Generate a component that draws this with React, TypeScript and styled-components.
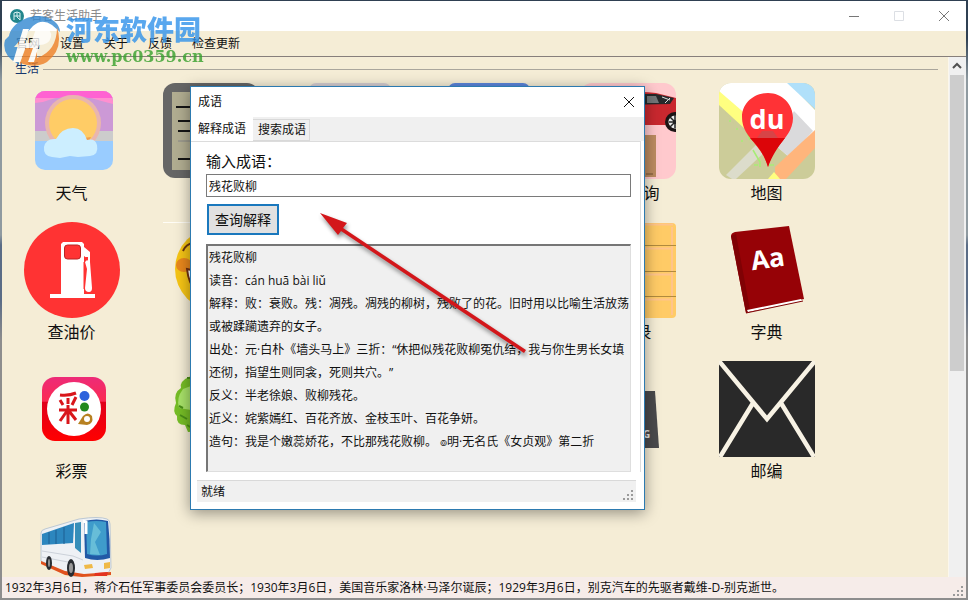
import React from "react";
import styled, { createGlobalStyle, css } from "styled-components";

const GlobalStyle = createGlobalStyle`
  *, *::before, *::after { box-sizing: border-box; }
  body {
    margin: 0;
    font-family: "Open Sans", "Noto Sans CJK SC", sans-serif;
    font-size: 12px;
    line-height: 20px;
    color: #101010;
    text-spacing-trim: space-all;
  }
  button, input, textarea { font: inherit; color: inherit; margin: 0; }
`;

const Desktop = styled.div`
  position: relative;
  height: 100vh;
  overflow: hidden;
  padding: 1px 2px 2px;
  background: linear-gradient(#2f4052 0 38px, #8f9aa0 80px 235px, #5a6c86 245px 300px, #8d8d8d 340px);
`;

const MainWindow = styled.div`
  height: 100%;
  display: flex;
  flex-direction: column;
  background: #f5edd6;
`;

const TitleBar = styled.header`
  height: 30px;
  flex: none;
  display: flex;
  align-items: center;
  gap: 6px;
  padding-left: 8px;
  background: #fff;
  color: #8a8a8a;
`;

const Title = styled.h1`
  flex: 1;
  margin: 0;
  font-size: 12px;
  font-weight: 400;
`;

const CaptionButtons = styled.div`
  display: flex;
`;

const CaptionButton = styled.button`
  width: 45px;
  height: 30px;
  padding: 0;
  border: 0;
  background: none;
  display: grid;
  place-items: center;
`;

const MenuBar = styled.nav`
  flex: none;
  height: 26px;
  display: flex;
  align-items: center;
  gap: 20px;
  padding: 0 14px;
  border-bottom: 1px solid #877f7b;
`;

const MenuItem = styled.button`
  padding: 0;
  border: 0;
  background: none;
  line-height: 20px;
`;

const Body = styled.main`
  flex: 1;
  min-height: 0;
  display: flex;
`;

const Section = styled.section`
  flex: 1;
  overflow: hidden;
`;

const SectionTitle = styled.h2`
  height: 24px;
  margin: 0 10px 2px 13px;
  display: flex;
  align-items: center;
  gap: 4px;
  font-size: 12px;
  font-weight: 400;
  color: #16366c;
  &::after {
    content: "";
    flex: 1;
    border-top: 1px solid #aaa69c;
  }
`;

const TileGrid = styled.div`
  display: grid;
  grid-template-columns: repeat(auto-fill, 139px);
  grid-auto-rows: 139px;
`;

const Tile = styled.button`
  padding: 0;
  border: 0;
  background: none;
  display: flex;
  flex-direction: column;
  align-items: center;
  font-size: 16px;
  line-height: 28px;
  svg { display: block; flex: none; }
`;

const ScrollTrack = styled.div`
  flex: none;
  width: 18px;
  padding: 0 2px 0 1px;
  background: #f0f0f0;
  border-left: 1px solid #fbf7ec;
`;

const ScrollButton = styled.button`
  display: grid;
  place-items: center;
  width: 100%;
  height: 18px;
  padding: 0;
  border: 0;
  background: none;
`;

const ScrollThumb = styled.div`
  height: 57%;
  background: #cdcdcd;
`;

const StatusBar = styled.footer<{ $dialog?: boolean }>`
  flex: none;
  display: flex;
  justify-content: space-between;
  align-items: center;
  padding: 0 1px 0 3px;
  height: 21px;
  background: #f6ece9;
  white-space: nowrap;
  svg { align-self: flex-end; }
  ${(p) => p.$dialog && css`
    height: 22px;
    margin: 8px 8px 7px 6px;
    padding-left: 4px;
    background: #f0f0f0;
    border-top: 1px solid #d9d9d9;
  `}
`;

const Dialog = styled.div`
  position: absolute;
  left: 190px;
  top: 86px;
  width: 455px;
  background: #fff;
  border: 1px solid #2c7ab0;
  box-shadow: 0 3px 14px rgba(0, 0, 0, 0.4);
`;

const DialogTitle = styled.div`
  height: 30px;
  display: flex;
  align-items: center;
  justify-content: space-between;
  padding-left: 7px;
`;

const DialogClose = styled(CaptionButton)`
  width: 31px;
`;

const TabList = styled.div`
  display: flex;
  align-items: flex-end;
  height: 24px;
  background: #f0f0f0;
`;

const Tab = styled.button<{ $active?: boolean }>`
  height: ${(p) => (p.$active ? 24 : 22)}px;
  padding: ${(p) => (p.$active ? "0 6px 0 7px" : "0 3px 0 5px")};
  border: 1px solid ${(p) => (p.$active ? "#fff" : "#d9d9d9")};
  border-left: 0;
  background: ${(p) => (p.$active ? "#fff" : "#f0f0f0")};
  line-height: 20px;
`;

const Panel = styled.div`
  margin-right: 3px;
  padding: 7px 9px 0 15px;
  border-top: 1px solid #dcdcdc;
  border-right: 1px solid #dcdcdc;
`;

const FieldLabel = styled.label`
  display: block;
  font-size: 15px;
  line-height: 25px;
`;

const WordInput = styled.input`
  display: block;
  width: 100%;
  height: 23px;
  padding: 0 2px;
  border: 1px solid #7a7a7a;
  background: #fff;
  outline: 0;
`;

const QueryButton = styled.button`
  display: block;
  margin: 7px 0 9px 1px;
  height: 31px;
  padding: 0 6px;
  border: 2px solid #1a78bd;
  background: #e1e1e1;
  font-size: 14px;
`;

const Result = styled.textarea`
  display: block;
  width: 100%;
  height: 228px;
  padding: 0 0 0 1px;
  resize: none;
  overflow: hidden;
  outline: 0;
  border: 1px solid;
  border-width: 2px 1px 1px 2px;
  border-color: #767676 #dedede #dedede #767676;
  border-radius: 0;
  background: #f0f0f0;
  line-height: 23px;
`;

const Arrow = styled.svg`
  position: absolute;
  left: 310px;
  top: 205px;
  pointer-events: none;
  filter: drop-shadow(1px 3px 2px rgba(0, 0, 0, 0.45));
`;

const Watermark = styled.div`
  position: absolute;
  left: 4px;
  top: 12px;
  display: flex;
  gap: 4px;
  pointer-events: none;
  opacity: 0.8;
  svg { margin-top: 2px; }
`;

const MarkText = styled.div`
  display: flex;
  flex-direction: column;
`;

const MarkName = styled.span`
  font: 900 27px/34px "Noto Sans CJK SC", sans-serif;
  color: #3092ea;
`;

const MarkUrl = styled.span`
  font: 700 16px/22px "DejaVu Serif", serif;
  color: #36a02c;
`;

const Picture = ({ children }: { children: React.ReactNode }) => (
  <svg width="96" height="96" viewBox="0 0 96 96" aria-hidden="true">{children}</svg>
);

const WeatherIcon = () => (
  <Picture>
    <clipPath id="wx"><rect x="11" y="8" width="78" height="79" rx="10" /></clipPath>
    <g clipPath="url(#wx)">
      <rect x="11" y="8" width="78" height="80" fill="#99ccff" />
      <rect x="11" y="8" width="78" height="50" fill="#cccccc" />
      <rect x="11" y="8" width="78" height="40" fill="#cc99d6" />
      <path d="M11 8h78v13q-8-2-15-4Q49 9 25 17q-7 3-14 3z" fill="#ff8fd0" />
      <path d="M11 8h78v7H64Q49 9 35 15H11z" fill="#ff62d2" />
      <circle cx="49" cy="40" r="28" fill="#e9b6ae" />
      <circle cx="49" cy="40" r="24" fill="#ffcc66" />
      <path d="M60 55l7-1-4 8z" fill="#f0a04c" />
      <path d="M28 74q-9-1-8-10 2-9 12-8 6-11 17-11 10 0 14 12 8-2 10 5 2 10-7 11l-12 1-8-1-10 2z" fill="#cceeff" />
    </g>
  </Picture>
);

const NotesIcon = () => (
  <Picture>
    <rect width="96" height="95" rx="12" fill="#666" />
    <rect x="9" y="9" width="78" height="78" fill="#b1ad91" />
    <path d="M13 24h60M15 38h60M15 48h60M15 76h60" stroke="#151515" strokeWidth="2" />
    <path d="M15 58h60" stroke="#888" strokeWidth="1" />
  </Picture>
);

const PlainIcon = ({ color }: { color: string }) => (
  <Picture><rect x="7" width="82" height="90" rx="7" fill={color} /></Picture>
);

const CarIcon = () => (
  <Picture>
    <clipPath id="car"><rect width="96" height="96" rx="12" /></clipPath>
    <g clipPath="url(#car)">
      <rect width="96" height="96" fill="#ffc9cd" />
      <path d="M10 20q30-14 66-10l20 5v27H10z" fill="#c9282f" />
      <path d="M40 11h36l18 4-4 6-50 1z" fill="#26292b" />
      <path d="M67 13h9l3 7H67z" fill="#737779" />
      <path d="M82 14l8 3M85 20l5-5" stroke="#ddd" />
      <circle cx="95" cy="39" r="10" fill="#1b1414" />
      <circle cx="95" cy="39" r="6.500" fill="#ececec" />
      <path d="M89 39h12M95 32v13M90 34l9 9M90 44l9-9" stroke="#222" strokeWidth="1.500" />
      <rect x="20" y="52" width="56" height="42" fill="#bc8b60" />
      <path d="M66 91h7" stroke="#775332" />
    </g>
  </Picture>
);

const MapIcon = () => (
  <Picture>
    <clipPath id="map"><rect width="96" height="96" rx="12" /></clipPath>
    <g clipPath="url(#map)">
      <rect width="96" height="96" fill="#cccc99" />
      <path d="M0 0h70l26 27v23L70 74 0 12z" fill="#fff" />
      <path d="M68 0h28v26z" fill="#b0e0fa" />
      <path d="M0 22V9l30 27 12 38z" fill="#cccc99" />
      <path d="M0 8l29 25-3 13L0 22z" fill="#ffff80" />
      <path d="M75 28l19 20-24 26-14-12z" fill="#dadadc" />
      <path d="M7 92l34-34 8 8-32 30h-4z" fill="#dcdccb" />
      <path d="M96 47v18L67 96H56V84z" fill="#ffb57c" />
      <path d="M49 96l6-7 6 7z" fill="#ffff80" />
      <path d="M10 38h2m5 8h2m4-10h1m-2 22h2m4-9l3 8m-3-18l4 6m2 22l7 12m-5-20l7 10m-2 15v-6m9 4h5m-20 0h4" stroke="#a6ed76" strokeWidth="1.500" />
      <path d="M49 10c14 0 25 11 25 25 0 12-8 20-16 30-5 7-7 12-9 19-3-10-7-16-13-23-7-9-13-15-13-27C23 21 34 10 49 10z" fill="#ff3236" />
      <path d="M31 55h35c-8 10-13 18-17 29-4-13-10-21-18-29z" fill="#dc0509" />
      <path d="M43 48h11l5 7H38z" fill="#d74447" />
      <text x="48" y="46" textAnchor="middle" fontFamily="Open Sans, sans-serif" fontWeight="700" fontSize="27" fill="#fff">du</text>
    </g>
  </Picture>
);

const FuelIcon = () => (
  <Picture>
    <circle cx="48" cy="48" r="48" fill="#ff3333" />
    <path d="M37 72V22l2-2h19l2 2v50h11v4H26v-4z" fill="#fff" />
    <rect x="40.500" y="23" width="16" height="14" rx="3" fill="#ff3333" stroke="#b92323" />
    <path d="M60 25l6 5v10l2 26q0 4-3 4-4 0-4-4l2-19-2-7 3-3-4-3z" fill="#fff" />
    <path d="M60 40v27" stroke="#ff3333" />
    <path d="M61 35h3v4z" fill="#ff3333" />
  </Picture>
);

const LaughIcon = () => (
  <Picture>
    <path d="M0 .5h96" stroke="#fffdf6" />
    <circle cx="54" cy="47" r="42" fill="#f5c415" />
    <ellipse cx="21" cy="43" rx="8" ry="7" fill="#e8871c" />
    <path d="M20 29q3-7 10-8" fill="none" stroke="#6a3510" strokeWidth="2" />
    <path d="M24 47q30 8 62 0-3 32-31 32Q27 76 24 47z" fill="#fff" stroke="#713213" strokeWidth="2" />
  </Picture>
);

const FilesIcon = () => (
  <Picture>
    <rect x="1" y="1" width="95" height="95" rx="4" fill="#ffcb66" />
    <path d="M2 2.500h91M3 26.500h90M3 52.500h90M3 77.500h90M92 5v88" stroke="#ffc48c" strokeWidth="2" />
    <path d="M1 23.500h95M1 49.500h95M1 74.500h95" stroke="#b18a3e" />
  </Picture>
);

const BookIcon = () => (
  <Picture>
    <path d="M12 14q0-3 4-4l54-6 15 73-58 14z" fill="#960206" />
    <path d="M12 14l5-2 14 76-4 3z" fill="#800104" />
    <path d="M28 88l54-11 1 2-54 11z" fill="#fff" />
    <path d="M27 91l57-12" stroke="#7e0003" />
    <text x="49" y="46" textAnchor="middle" transform="rotate(-8 49 40)" fontFamily="Open Sans, sans-serif" fontWeight="700" fontSize="26" fill="#fff">Aa</text>
  </Picture>
);

const LotteryIcon = () => (
  <Picture>
    <defs>
      <linearGradient id="lot" x2="0" y2="1">
        <stop offset="0" stopColor="#ed2b78" />
        <stop offset=".38" stopColor="#fb2b52" />
        <stop offset=".39" stopColor="#e0001c" />
        <stop offset="1" stopColor="#ff0000" />
      </linearGradient>
    </defs>
    <rect x="18" y="16" width="64" height="64" rx="13" fill="url(#lot)" />
    <circle cx="50" cy="48" r="27" fill="#fff" />
    <path d="M36 34q9 1 16-2M36 39l3 5M44 37v6M52 36l-4 8M35 49h18M44 44v19M43 50l-7 10M45 50l7 9" fill="none" stroke="#d9161b" strokeWidth="3" />
    <circle cx="60.500" cy="35" r="5" fill="#2d62dc" />
    <circle cx="60.500" cy="46" r="4.500" fill="#23891f" />
    <path d="M54 63l5-8q5-5 9 0 2 8-5 9z" fill="#b78122" />
    <circle cx="63" cy="58" r="3" fill="#fff" />
  </Picture>
);

const TreeIcon = () => (
  <Picture>
    <path d="M28 15q-12 5-10 12-8 5-5 15-4 9 1 13-1 9 8 9l3 7 40-2 15-20-12-32z" fill="#76bd26" />
    <path d="M20 28l8-3v24l-12-2q-3-10 4-19z" fill="#a8e269" />
    <path d="M24 17h5m-12 37l7 4m-8-13l4 2m4 17l5 3" stroke="#4a8f18" strokeWidth="2" />
  </Picture>
);

const DeviceIcon = () => (
  <Picture>
    <path d="M8 30h67l4 57H4z" fill="#4a4a4c" />
    <text x="63" y="77" fontFamily="Open Sans, sans-serif" fontWeight="700" fontSize="10" fill="#e6e6e6">G</text>
  </Picture>
);

const MailIcon = () => (
  <Picture>
    <rect width="96" height="96" fill="#292929" />
    <path d="M0 0l48 58L96 0M34 42L1 96M62 42l33 54" fill="none" stroke="#f7f2e4" strokeWidth="4.500" />
  </Picture>
);

const BusIcon = () => (
  <Picture>
    <path d="M17 33q0-3 4-4l34-10q20-3 28 0 3 1 3 5l1 44-4 7-35 1-31-15z" fill="#eef1f5" stroke="#bcc8d3" />
    <path d="M18 34l32-11-1 20-31 2z" fill="#2c86be" />
    <path d="M25 32v12M32 30v14M40 27v17" stroke="#1d5f92" />
    <path d="M51 23l6-1v31l-6-5z" fill="#368eb9" />
    <path d="M60 21q13-3 24 0 2 18 2 37-13 4-25 0z" fill="#2159a6" />
    <path d="M62 22q11-2 20 0l1 32q-10 3-20 0z" fill="#3f9ccb" />
    <path d="M70 23l7 9-6 10 5 13-10-1 1-15z" fill="#67bdd8" />
    <path d="M59 21l3 1v12" fill="none" stroke="#fff" strokeWidth="3" />
    <path d="M18 51l31 5 10 4M18 57l31 6" fill="none" stroke="#ccd2da" />
    <path d="M17 61l24 10 19 3 27-2v3l-29 2-17-2-24-11z" fill="#e0521e" />
    <path d="M60 65l8-1 1 4-8 1zM80 63l6-1v6l-6 1z" fill="#efb947" />
    <path d="M71 73l13-1-1 4H70z" fill="#e33320" />
    <ellipse cx="25" cy="63" rx="3" ry="7" fill="#292d32" />
    <ellipse cx="25" cy="63" rx="1" ry="4" fill="#999" />
    <ellipse cx="47" cy="68" rx="4" ry="9" fill="#292d32" />
    <ellipse cx="47" cy="68" rx="2" ry="5" fill="#999" />
  </Picture>
);

const Grip = () => (
  <svg width="12" height="12" viewBox="0 0 12 12" fill="#9a9a9a" aria-hidden="true">
    <path d="M8 0h2v2H8zM4 4h2v2H4zM8 4h2v2H8zM0 8h2v2H0zM4 8h2v2H4zM8 8h2v2H8z" />
  </svg>
);

const Cross = ({ color }: { color: string }) => (
  <svg width="12" height="12" viewBox="0 0 12 12" stroke={color} aria-hidden="true">
    <path d="M1 1l10 10M11 1L1 11" />
  </svg>
);

const AppIcon = () => (
  <svg width="14" height="14" viewBox="0 0 14 14" aria-hidden="true">
    <circle cx="7" cy="7" r="7" fill="#23868d" />
    <path d="M4 11V4l3-1 3 1v7M4 7h6M7 3v5l3 3" fill="none" stroke="#d9f0f0" />
  </svg>
);

const menu = ["官网", "设置", "关于", "反馈", "检查更新"];

const tiles: { icon: React.ReactNode; label?: string }[] = [
  { icon: <WeatherIcon />, label: "天气" },
  { icon: <NotesIcon /> },
  { icon: <PlainIcon color="#d5cdd0" /> },
  { icon: <PlainIcon color="#5b86dc" /> },
  { icon: <CarIcon />, label: "违章查询" },
  { icon: <MapIcon />, label: "地图" },
  { icon: <FuelIcon />, label: "查油价" },
  { icon: <LaughIcon /> },
  { icon: null },
  { icon: null },
  { icon: <FilesIcon />, label: "通讯录" },
  { icon: <BookIcon />, label: "字典" },
  { icon: <LotteryIcon />, label: "彩票" },
  { icon: <TreeIcon /> },
  { icon: null },
  { icon: null },
  { icon: <DeviceIcon /> },
  { icon: <MailIcon />, label: "邮编" },
  { icon: <BusIcon /> },
];

const explanation = [
  "残花败柳",
  "读音：cán huā bài liǔ",
  "解释：败：衰败。残：凋残。凋残的柳树，残败了的花。旧时用以比喻生活放荡或被蹂躏遗弃的女子。",
  "出处：元·白朴《墙头马上》三折：“休把似残花败柳冤仇结，我与你生男长女填还彻，指望生则同衾，死则共穴。”",
  "反义：半老徐娘、败柳残花。",
  "近义：姹紫嫣红、百花齐放、金枝玉叶、百花争妍。",
  "造句：我是个嫩蕊娇花，不比那残花败柳。 ๏明·无名氏《女贞观》第二折",
].join("\n");

export default function App() {
  return (
    <Desktop>
      <GlobalStyle />
      <MainWindow>
        <TitleBar>
          <AppIcon />
          <Title>若客生活助手</Title>
          <CaptionButtons>
            <CaptionButton aria-label="最小化">
              <svg width="12" height="12" stroke="#777"><path d="M1 6.500h10" /></svg>
            </CaptionButton>
            <CaptionButton aria-label="最大化" disabled>
              <svg width="12" height="12" stroke="#dcdfe4" fill="none"><path d="M1.500 1.500h9v9h-9z" /></svg>
            </CaptionButton>
            <CaptionButton aria-label="关闭"><Cross color="#777" /></CaptionButton>
          </CaptionButtons>
        </TitleBar>
        <MenuBar>
          {menu.map((name) => <MenuItem key={name}>{name}</MenuItem>)}
        </MenuBar>
        <Body>
          <Section>
            <SectionTitle>生活</SectionTitle>
            <TileGrid>
              {tiles.map((tile, i) => <Tile key={i}>{tile.icon}{tile.label}</Tile>)}
            </TileGrid>
          </Section>
          <ScrollTrack>
            <ScrollButton aria-label="向上滚动">
              <svg width="10" height="8" fill="none" stroke="#505050" strokeWidth="2"><path d="M1 6l4-4 4 4" /></svg>
            </ScrollButton>
            <ScrollThumb />
          </ScrollTrack>
        </Body>
        <StatusBar>
          <span>1932年3月6日，蒋介石任军事委员会委员长；1930年3月6日，美国音乐家洛林·马泽尔诞辰；1929年3月6日，别克汽车的先驱者戴维-D-别克逝世。</span>
          <Grip />
        </StatusBar>
      </MainWindow>

      <Dialog role="dialog" aria-label="成语">
        <DialogTitle>
          成语
          <DialogClose aria-label="关闭对话框"><Cross color="#111" /></DialogClose>
        </DialogTitle>
        <TabList role="tablist">
          <Tab $active role="tab" aria-selected="true">解释成语</Tab>
          <Tab role="tab" aria-selected="false">搜索成语</Tab>
        </TabList>
        <Panel role="tabpanel">
          <FieldLabel htmlFor="word">输入成语：</FieldLabel>
          <WordInput id="word" defaultValue="残花败柳" />
          <QueryButton>查询解释</QueryButton>
          <Result readOnly aria-label="解释" value={explanation} />
        </Panel>
        <StatusBar $dialog><span>就绪</span><Grip /></StatusBar>
      </Dialog>

      <Arrow width="230" height="160" viewBox="0 0 230 160" aria-hidden="true">
        <path d="M10 8l27 10-4 5 183 122-2 3L31 26l-3 4z" fill="#d3161a" />
      </Arrow>

      <Watermark aria-hidden="true">
        <svg width="58" height="54" viewBox="0 0 58 54">
          <path d="M5 22C8 6 34-5 50 7q6 5 6 11l-8-7q-10-7-19 1L10 33h8l-4 17Q-3 41 1 26z" fill="#3288d2" />
          <path d="M53 13q7 22-10 35-12 7-27 1l7-19h10v14q20-7 20-31z" fill="#ee8026" />
          <path d="M25 15l-5 14h7l5-14h8q8 0 7 8-2 8-12 8l-5 17h-6l5-14h-8l-5 14h-7L19 15z" fill="#fff" />
        </svg>
        <MarkText>
          <MarkName>河东软件园</MarkName>
          <MarkUrl>www.pc0359.cn</MarkUrl>
        </MarkText>
      </Watermark>
    </Desktop>
  );
}
